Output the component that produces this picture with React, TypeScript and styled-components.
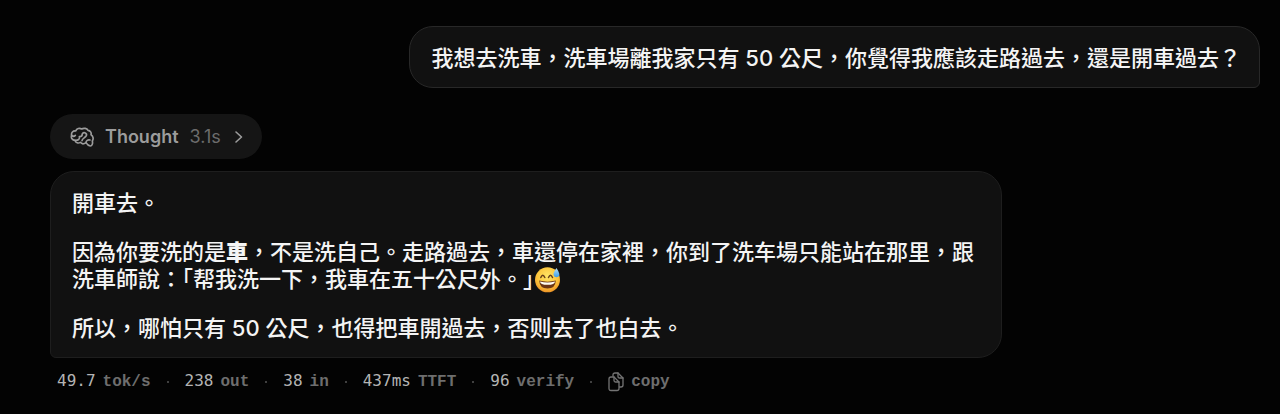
import React from "react";
import styled, { createGlobalStyle } from "styled-components";

const GlobalStyle = createGlobalStyle`
  * { box-sizing: border-box; }
  body {
    margin: 0;
    background: #030303;
    color: #f4f4f4;
    font-family: Inter, "Noto Sans CJK TC", sans-serif;
    -webkit-font-smoothing: antialiased;
  }
  button { font: inherit; color: inherit; border: 0; background: none; padding: 0; cursor: pointer; }
`;

const Chat = styled.main`
  display: flex;
  flex-direction: column;
  padding: 26px 20px 20px 50px;
`;

const Bubble = styled.article<{ $own?: boolean }>`
  align-self: ${(p) => (p.$own ? "flex-end" : "flex-start")};
  max-width: 952px;
  padding: ${(p) => (p.$own ? "18px 18px 15px 21px" : "18px 21px 15px")};
  background: #111111;
  border: 1px solid ${(p) => (p.$own ? "#282828" : "#1e1e1e")};
  border-radius: ${(p) => (p.$own ? "24px 24px 6px 24px" : "24px 24px 24px 6px")};
`;

const Paragraph = styled.p`
  margin: 0;
  font-size: 22px;
  line-height: 27px;
  font-weight: 500;
  & + & { margin-top: 22px; }
`;

const Strong = styled.strong`
  font-weight: 800;
`;

const HalfWidth = styled.span`
  font-feature-settings: "halt";
`;

const ThoughtButton = styled.button`
  display: flex;
  align-items: center;
  align-self: flex-start;
  gap: 11px;
  height: 45px;
  margin: 26px 0 12px;
  padding: 0 18px 0 20px;
  border-radius: 23px;
  background: #151515;
  color: #9c9c9c;
`;

const ThoughtLabel = styled.span`
  font-size: 18px;
  font-weight: 600;
`;

const Duration = styled.span`
  font-size: 18px;
  color: #6c6c6c;
`;

const Stats = styled.footer`
  display: flex;
  align-items: center;
  flex-wrap: wrap;
  gap: 16px;
  padding: 11px 7px 0;
  line-height: 24px;
`;

const Stat = styled.span`
  display: flex;
  align-items: baseline;
  gap: 7px;
`;

const Value = styled.span`
  font: 16px/24px "DejaVu Sans Mono", monospace;
  color: #b4b4b4;
`;

const Unit = styled.span`
  font: bold 16px/24px "Liberation Mono", monospace;
  color: #6e6e6e;
`;

const Dot = styled.span`
  width: 2px;
  height: 2px;
  border-radius: 1px;
  background: #565656;
`;

const CopyButton = styled.button`
  display: flex;
  align-items: center;
  gap: 7px;
  color: #747474;
`;

const Emoji = styled.svg`
  width: 27px;
  height: 27px;
  margin: -4px 0;
  vertical-align: -2px;
`;

const BrainIcon = () => (
  <svg width="24" height="20" viewBox="0 0 72 60" fill="none" stroke="currentColor" strokeWidth="5" strokeLinecap="round" strokeLinejoin="round" aria-hidden="true">
    <path d="M15 40C7 40 2 33 5 25C3 17 9 11 17 12C20 4 29 2 35 6C41 2 51 4 54 10C61 11 65 17 63 23C70 27 71 36 67 42C69 50 66 57 61 57C54 56 51 52 48 47C42 51 35 51 31 46C25 50 17 48 15 40Z" />
    <path d="M5 25C8 28 13 28 16 25M15 40C24 41 31 36 28 29M28 29C36 29 37 24 37 20C42 14 52 18 49 26C46 33 37 33 36 41M48 47C48 41 54 37 60 39" />
  </svg>
);

const ChevronIcon = () => (
  <svg width="12" height="14" viewBox="0 0 12 14" fill="none" stroke="currentColor" strokeWidth="1.6" strokeLinecap="round" strokeLinejoin="round" aria-hidden="true">
    <path d="M4 2L9.5 7L4 12" />
  </svg>
);

const CopyIcon = () => (
  <svg width="16" height="20" viewBox="0 0 16 20" fill="none" stroke="currentColor" strokeWidth="1.3" strokeLinecap="round" strokeLinejoin="round" aria-hidden="true">
    <path d="M5 4V3Q5 1 7 1H10L15 6V13Q15 15 13 15H11.5" />
    <path d="M10 1V4.5Q10 6 11.5 6H15" />
    <path d="M3 5H6L11 10V16.5Q11 18.5 9 18.5H3Q1 18.5 1 16.5V7Q1 5 3 5Z" />
    <path d="M6 5V8.5Q6 10 7.5 10H11" />
  </svg>
);

const SweatSmile = () => (
  <Emoji viewBox="0 0 27 27" role="img" aria-label="😅">
    <defs>
      <radialGradient id="face" cx="50%" cy="35%" r="65%">
        <stop offset="0" stopColor="#ffe566" />
        <stop offset="0.65" stopColor="#fcc43a" />
        <stop offset="1" stopColor="#ed9427" />
      </radialGradient>
      <linearGradient id="drop" x1="0" y1="0" x2="0" y2="1">
        <stop offset="0" stopColor="#b5e2fa" />
        <stop offset="1" stopColor="#3c9de6" />
      </linearGradient>
    </defs>
    <circle cx="13.5" cy="13.8" r="12.5" fill="url(#face)" />
    <path d="M6.8 11.5Q8.8 7 10.8 11.5M14.5 11.5Q16.5 7 18.5 11.5" fill="none" stroke="#684018" strokeWidth="1.5" strokeLinecap="round" />
    <path d="M5.2 14.6Q13.5 16.8 21.8 14.6Q21.5 22.6 13.5 22.6Q5.5 22.6 5.2 14.6Z" fill="#6b3515" />
    <path d="M6 15.4Q13.5 17.4 21 15.4Q20.8 18.8 13.5 18.8Q6.2 18.8 6 15.4Z" fill="#fffdf4" />
    <path d="M22.5 2Q19.2 6.5 19.5 8.7Q20.1 11.5 22.8 11.3Q25.6 10.9 25.4 8.1Q24.9 5.5 22.5 2Z" fill="url(#drop)" />
  </Emoji>
);

const stats = [
  ["49.7", "tok/s"],
  ["238", "out"],
  ["38", "in"],
  ["437ms", "TTFT"],
  ["96", "verify"],
];

export default function App() {
  return (
    <Chat lang="zh-Hant">
      <GlobalStyle />
      <Bubble $own>
        <Paragraph>我想去洗車，洗車場離我家只有 50 公尺，你覺得我應該走路過去，還是開車過去？</Paragraph>
      </Bubble>
      <ThoughtButton type="button" aria-expanded="false">
        <BrainIcon />
        <ThoughtLabel>Thought</ThoughtLabel>
        <Duration>3.1s</Duration>
        <ChevronIcon />
      </ThoughtButton>
      <Bubble>
        <Paragraph>開車去。</Paragraph>
        <Paragraph>
          因為你要洗的是<Strong>車</Strong>，不是洗自己。走路過去，車還停在家裡，你到了洗车場只能站在那里，跟洗車師說：「帮我洗一下，我車在五十公尺外。<HalfWidth>」</HalfWidth><SweatSmile />
        </Paragraph>
        <Paragraph>所以，哪怕只有 50 公尺，也得把車開過去，否则去了也白去。</Paragraph>
      </Bubble>
      <Stats>
        {stats.map(([value, unit]) => (
          <React.Fragment key={unit}>
            <Stat>
              <Value>{value}</Value>
              <Unit>{unit}</Unit>
            </Stat>
            <Dot />
          </React.Fragment>
        ))}
        <CopyButton type="button">
          <CopyIcon />
          <Unit>copy</Unit>
        </CopyButton>
      </Stats>
    </Chat>
  );
}
